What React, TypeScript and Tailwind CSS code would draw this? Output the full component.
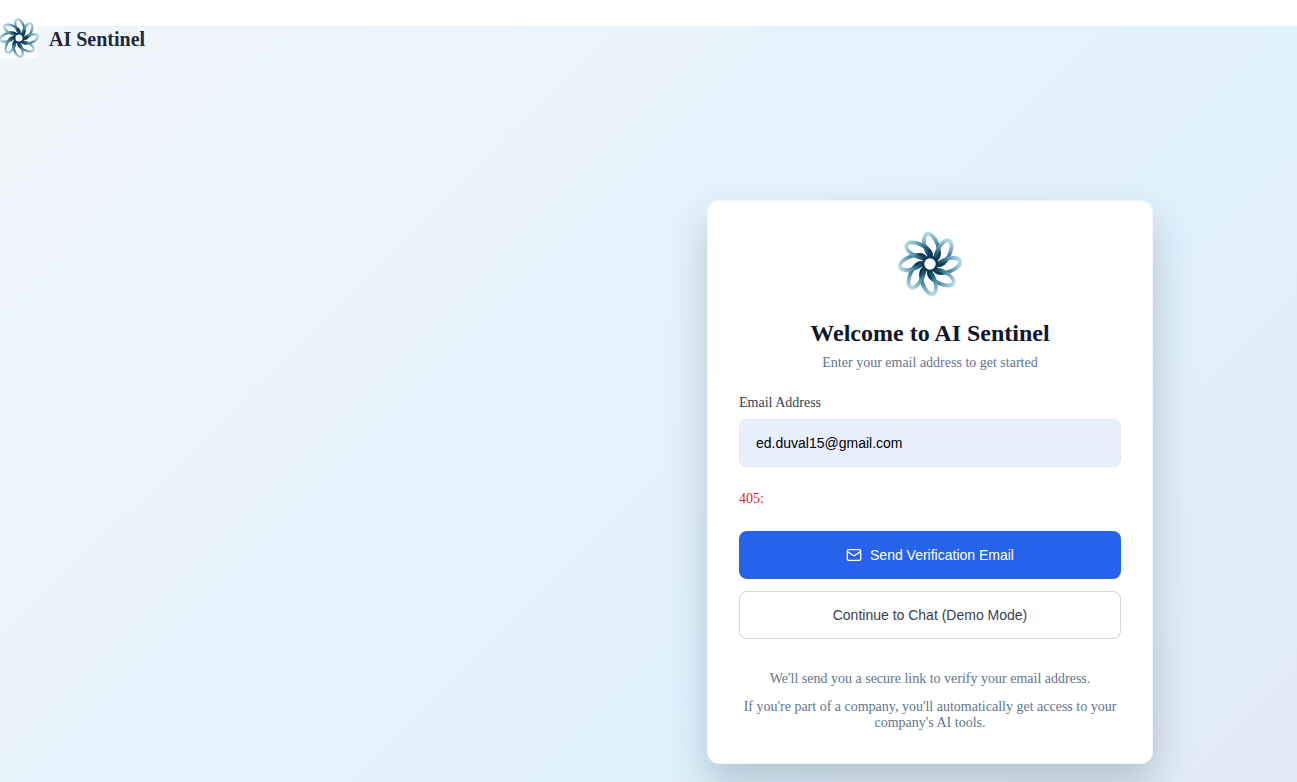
import React from "react";

function Logo({ id, className }: { id: string; className: string }) {
  const angles = [0, 45, 90, 135, 180, 225, 270, 315];
  return (
    <svg viewBox="0 0 64 64" className={className} fill="none">
      <defs>
        <radialGradient id={id} gradientUnits="userSpaceOnUse" cx="32" cy="32" r="32">
          <stop offset="0.28" stopColor="#0b3a52" />
          <stop offset="0.5" stopColor="#2f6c86" />
          <stop offset="0.75" stopColor="#72aac1" />
          <stop offset="1" stopColor="#bcdde9" />
        </radialGradient>
      </defs>
      {angles.map((a) => (
        <g key={a} transform={`rotate(${a} 32 32)`}>
          <ellipse cx="33.5" cy="14.5" rx="6.4" ry="13.4" transform="rotate(-20 33.5 14.5)" stroke={`url(#${id})`} strokeWidth="3.8" />
        </g>
      ))}
      <circle cx="32" cy="32" r="7" stroke="#0b3a52" strokeWidth="2.6" fill="#ffffff" />
    </svg>
  );
}

export default function App() {
  return (
    <div className="h-[782px] overflow-hidden bg-white flex flex-col font-['Liberation_Serif',serif]">
      <div className="h-[26px] shrink-0 bg-white" />
      <div className="flex-1 flex flex-col bg-[linear-gradient(135deg,#f1f5f9_0%,#e0f2fe_66%,#e1ebf6_100%)]">
        <header className="flex items-center h-[40px] -mt-[8px] shrink-0">
          <div className="w-[37px] h-[40px] bg-white flex items-center justify-center shrink-0">
            <Logo id="logo-small" className="w-[40px] h-[40px] shrink-0" />
          </div>
          <span className="ml-3 pt-[2px] text-[20px] leading-[28px] font-bold text-[#1e293b]">AI Sentinel</span>
        </header>
        <main className="flex justify-end pr-[144px] pt-[142px]">
          <div className="w-[446px] h-[564px] shrink-0 bg-white rounded-xl border border-[#f4f6f9] shadow-[0_20px_40px_rgba(20,40,60,0.22)] px-[31px] pt-[31px] flex flex-col">
            <div className="flex justify-center">
              <Logo id="logo-large" className="w-[64px] h-[64px]" />
            </div>
            <h1 className="mt-[21px] text-center text-[24px] leading-[32px] font-bold text-[#0f172a]">Welcome to AI Sentinel</h1>
            <p className="mt-[4px] text-center text-[14px] leading-[20px] text-[#64748b]">Enter your email address to get started</p>
            <label className="mt-[20px] text-[14px] leading-[20px] text-[#374151]">Email Address</label>
            <div className="mt-[6px] h-[48px] rounded-lg border border-[#e2e8f0] bg-[#e8f0fe] px-4 flex items-center font-['Liberation_Sans',sans-serif] text-[14px] text-black">
              ed.duval15@gmail.com
            </div>
            <p className="mt-[22px] text-[14px] leading-[20px] text-[#dc2626]">405:</p>
            <button className="mt-[22px] h-[48px] rounded-lg bg-[#2563eb] text-white flex items-center justify-center gap-2 font-['Liberation_Sans',sans-serif] text-[14px] font-medium">
              <svg width="16" height="16" viewBox="0 0 24 24" fill="none" stroke="currentColor" strokeWidth="2" strokeLinecap="round" strokeLinejoin="round">
                <rect x="2" y="4" width="20" height="16" rx="2" />
                <path d="m22 7-8.97 5.7a1.94 1.94 0 0 1-2.06 0L2 7" />
              </svg>
              Send Verification Email
            </button>
            <button className="mt-3 h-[48px] rounded-lg border border-[#d1d5db] bg-white text-[#374151] flex items-center justify-center font-['Liberation_Sans',sans-serif] text-[14px] font-medium">
              Continue to Chat (Demo Mode)
            </button>
            <div className="mt-[32px] text-center text-[14px] leading-[16px] text-[#64748b]">
              <p>We'll send you a secure link to verify your email address.</p>
              <p className="mt-[12px]">If you're part of a company, you'll automatically get access to your company's AI tools.</p>
            </div>
          </div>
        </main>
      </div>
    </div>
  );
}
